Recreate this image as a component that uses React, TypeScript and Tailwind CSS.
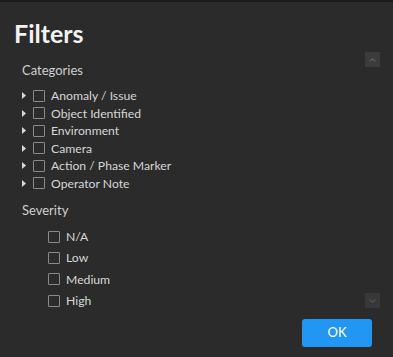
const categories = [
  'Anomaly / Issue',
  'Object Identified',
  'Environment',
  'Camera',
  'Action / Phase Marker',
  'Operator Note',
];

const severities = ['N/A', 'Low', 'Medium', 'High'];

function Box() {
  return <span className="block h-[12px] w-[12px] shrink-0 rounded-[1px] border border-[#8a8a8a]" />;
}

export default function App() {
  return (
    <div
      className="flex h-[357px] w-[393px] flex-col overflow-hidden border-t-2 border-[#1b1b1b] bg-[#2b2b2b] text-[#d6d6d6]"
      style={{ fontFamily: 'Lato, "Noto Sans", sans-serif' }}
    >
      <h1 className="pl-[14px] pt-[18px] text-[25px] font-bold leading-[26px] text-[#f2f2f2]">Filters</h1>

      <div className="mt-[5px] flex flex-1">
        <div className="flex-1 pl-[22px] pt-[10px]">
          <div className="text-[13px] leading-[18px] text-[#cfcfcf]">Categories</div>
          <ul className="mt-[8px]">
            {categories.map((c) => (
              <li key={c} className="flex h-[17.5px] items-center">
                <svg width="4" height="7" viewBox="0 0 4 7" className="mr-[7px]">
                  <path d="M0 0 L4 3.5 L0 7 Z" fill="#d8d8d8" />
                </svg>
                <Box />
                <span className="ml-[6px] text-[12.2px] leading-[17px]">{c}</span>
              </li>
            ))}
          </ul>

          <div className="mt-[9px] text-[13px] leading-[18px] text-[#cfcfcf]">Severity</div>
          <ul className="mt-[7px] pl-[26px]">
            {severities.map((s) => (
              <li key={s} className="flex h-[21.3px] items-center">
                <Box />
                <span className="ml-[6px] text-[12.2px] leading-[17px]">{s}</span>
              </li>
            ))}
          </ul>
        </div>

        <div className="mr-[13px] flex w-[15px] flex-col pt-[1px]">
          <div className="flex h-[15px] w-[15px] items-center justify-center bg-[#3c3c3c]">
            <svg width="7" height="4" viewBox="0 0 7 4">
              <path d="M0.5 3.5 L3.5 0.7 L6.5 3.5" stroke="#5a5a5a" strokeWidth="1.2" fill="none" />
            </svg>
          </div>
          <div className="flex-1" />
          <div className="mb-[4px] flex h-[15px] w-[15px] items-center justify-center bg-[#383838]">
            <svg width="7" height="4" viewBox="0 0 7 4">
              <path d="M0.5 0.5 L3.5 3.3 L6.5 0.5" stroke="#505050" strokeWidth="1.2" fill="none" />
            </svg>
          </div>
        </div>
      </div>

      <div className="flex justify-end pb-[10px] pr-[21px] pt-[7px]">
        <button className="h-[28px] w-[70px] rounded-[3px] bg-[#2196f3] text-[13px] text-white">OK</button>
      </div>
    </div>
  );
}
